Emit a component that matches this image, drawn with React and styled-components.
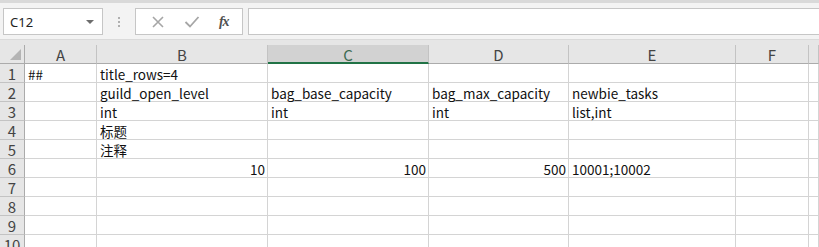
import React from "react";
import styled, { createGlobalStyle } from "styled-components";

const Global = createGlobalStyle`
  html, body { margin: 0; padding: 0; overflow: hidden; background: #ffffff; }
  body { font-family: "Noto Sans CJK SC", "Noto Sans", sans-serif; }
  * { box-sizing: border-box; }
`;

const Page = styled.div`
  width: 819px;
  height: 247px;
  overflow: hidden;
  background: #e6e6e6;
`;

const Toolbar = styled.div`
  height: 40px;
  border-top: 3px solid #d9d9d9;
  background: #f3f3f3;
  display: flex;
  align-items: flex-start;
  padding: 5px 0 0 3px;
  border-bottom: 1px solid #dadada;
`;

const NameBox = styled.div`
  width: 100px;
  height: 27px;
  background: #fff;
  border: 1px solid #c6c6c6;
  display: flex;
  align-items: center;
  justify-content: space-between;
  padding: 0 8px 0 6px;
  font-size: 13px;
  color: #222;
  font-family: "Noto Sans", sans-serif;
`;

const Caret = styled.span`
  width: 0;
  height: 0;
  border-left: 4px solid transparent;
  border-right: 4px solid transparent;
  border-top: 4px solid #6d6d6d;
`;

const Grip = styled.div`
  width: 32px;
  height: 27px;
  display: flex;
  flex-direction: column;
  align-items: center;
  justify-content: center;
  gap: 2px;
`;

const Dot = styled.span`
  width: 2px;
  height: 2px;
  background: #b0b0b0;
`;

const FxButtons = styled.div`
  width: 108px;
  height: 27px;
  background: #fff;
  border: 1px solid #c6c6c6;
  display: flex;
  align-items: center;
  justify-content: space-around;
  padding: 0 4px 0 6px;
  margin-right: 5px;
`;

const Fx = styled.span`
  font-family: "Liberation Serif", serif;
  font-style: italic;
  font-size: 14px;
  color: #505050;
  font-weight: bold;
  letter-spacing: -1px;
`;

const FormulaInput = styled.div`
  flex: 1;
  height: 27px;
  background: #fff;
  border: 1px solid #c6c6c6;
  border-right: none;
`;

const Sheet = styled.div`
  display: grid;
  grid-template-columns: 25px 72px 171px 161px 140px 167px 73px 1fr;
  grid-auto-rows: 19px;
  margin-top: 5px;
  background: #fff;
`;

const HeadCell = styled.div`
  background: ${(p) => (p.$selected ? "#d2d2d2" : "#e6e6e6")};
  border-right: 1px solid #c3c3c3;
  border-bottom: ${(p) => (p.$selected ? "2px solid #217346" : "1px solid #ababab")};
  display: flex;
  align-items: center;
  justify-content: center;
  font-size: 15px;
  color: ${(p) => (p.$selected ? "#3d6b52" : "#444")};
  font-family: "Noto Sans CJK SC", sans-serif;
  line-height: 1;
  padding-top: 1px;
`;

const Corner = styled.div`
  background: #e6e6e6;
  border-right: 1px solid #ababab;
  border-bottom: 1px solid #ababab;
  position: relative;
  svg { position: absolute; right: 3px; bottom: 3px; }
`;

const RowHead = styled.div`
  background: #e6e6e6;
  border-right: 1px solid #ababab;
  border-bottom: 1px solid #c3c3c3;
  display: flex;
  align-items: center;
  justify-content: center;
  font-size: 15px;
  color: #444;
  line-height: 1;
  padding-top: 1px;
  overflow: hidden;
`;

const Cell = styled.div`
  border-right: 1px solid #d4d4d4;
  border-bottom: 1px solid #d4d4d4;
  font-size: 13.5px;
  color: #111;
  line-height: 18px;
  padding-top: 1px;
  white-space: nowrap;
  overflow: visible;
  padding-left: ${(p) => (p.$right ? "2px" : "3px")};
  padding-right: 2px;
  text-align: ${(p) => (p.$right ? "right" : "left")};
  position: relative;
  z-index: ${(p) => (p.$text ? 1 : 0)};
`;

const cols = ["A", "B", "C", "D", "E", "F", ""];

const data = [
  ["##", "title_rows=4", "", "", "", "", ""],
  ["", "guild_open_level", "bag_base_capacity", "bag_max_capacity", "newbie_tasks", "", ""],
  ["", "int", "int", "int", "list,int", "", ""],
  ["", "标题", "", "", "", "", ""],
  ["", "注释", "", "", "", "", ""],
  ["", { v: "10", r: true }, { v: "100", r: true }, { v: "500", r: true }, "10001;10002", "", ""],
  ["", "", "", "", "", "", ""],
  ["", "", "", "", "", "", ""],
  ["", "", "", "", "", "", ""],
  ["", "", "", "", "", "", ""],
];

export default function App() {
  return (
    <Page>
      <Global />
      <Toolbar>
        <NameBox>
          <span>C12</span>
          <Caret />
        </NameBox>
        <Grip>
          <Dot />
          <Dot />
          <Dot />
        </Grip>
        <FxButtons>
          <svg width="14" height="14" viewBox="0 0 14 14">
            <path d="M2 2 L12 12 M12 2 L2 12" stroke="#a6a6a6" strokeWidth="1.6" fill="none" />
          </svg>
          <svg width="16" height="14" viewBox="0 0 16 14">
            <path d="M1.5 7 L6 11.5 L14.5 2" stroke="#a6a6a6" strokeWidth="1.8" fill="none" />
          </svg>
          <Fx>fx</Fx>
        </FxButtons>
        <FormulaInput />
      </Toolbar>
      <Sheet>
        <Corner>
          <svg width="11" height="11" viewBox="0 0 11 11">
            <polygon points="11,0 11,11 0,11" fill="#b4b4b4" />
          </svg>
        </Corner>
        {cols.map((c, i) => (
          <HeadCell key={"h" + i} $selected={c === "C"}>
            {c}
          </HeadCell>
        ))}
        {data.map((row, ri) => (
          <React.Fragment key={"r" + ri}>
            <RowHead>{ri + 1}</RowHead>
            {row.map((v, ci) => {
              const isObj = typeof v === "object";
              const val = isObj ? v.v : v;
              return (
                <Cell key={ci} $right={isObj && v.r} $text={!!val}>
                  {val}
                </Cell>
              );
            })}
          </React.Fragment>
        ))}
      </Sheet>
    </Page>
  );
}
